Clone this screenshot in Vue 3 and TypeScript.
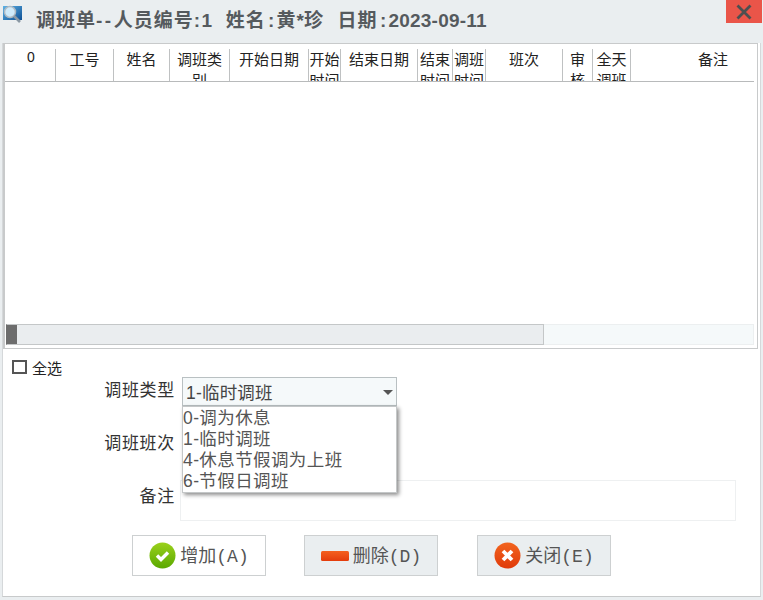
<script setup lang="ts">
interface Col { label: string; width: number }
const cols: Col[] = [
  { label: '0', width: 51 },
  { label: '工号', width: 58 },
  { label: '姓名', width: 56 },
  { label: '调班类别', width: 60 },
  { label: '开始日期', width: 79 },
  { label: '开始时间', width: 32 },
  { label: '结束日期', width: 77 },
  { label: '结束时间', width: 35 },
  { label: '调班时间', width: 33 },
  { label: '班次', width: 77 },
  { label: '审核', width: 30 },
  { label: '全天调班', width: 38 },
  { label: '备注', width: 164 },
]
const options = ['0-调为休息', '1-临时调班', '4-休息节假调为上班', '6-节假日调班']
</script>

<template>
  <div class="window">
    <header class="titlebar">
      <svg class="logo" width="22" height="20" viewBox="0 0 22 20">
        <defs>
          <linearGradient id="lg" x1="0" y1="0" x2="1" y2="1"><stop offset="0" stop-color="#5db2e6" /><stop offset="1" stop-color="#0d4f94" /></linearGradient>
        </defs>
        <rect x="1" y="1" width="19" height="14" fill="url(#lg)" />
        <circle cx="8" cy="7" r="5.5" fill="#cfeafa" stroke="#aeb9c2" stroke-width="1.5" />
        <path d="M12 11l6 6" stroke="#8a98a4" stroke-width="2.6" />
      </svg>
      <h1 class="title"><span class="cj">调班单</span><span class="dash">--</span><span class="cj">人员编号</span><span class="colon-a">:</span>1<span class="gap">&nbsp;&nbsp;</span><span class="cj">姓名</span><span class="colon-b">:</span><span class="cj">黄</span>*<span class="cj">珍</span><span class="gap">&nbsp;&nbsp;</span><span class="cj">日期</span><span class="colon-b">:</span><span class="date">2023-09-11</span></h1>
      <button class="close-x" type="button" aria-label="关闭">
        <svg width="16" height="16" viewBox="0 0 16 16"><path d="M1.5 1.5l13 13M14.5 1.5l-13 13" stroke="#4d4f50" stroke-width="2.8" /></svg>
      </button>
    </header>

    <main class="body">
      <section class="grid-panel">
        <div class="grid-head">
          <div v-for="c in cols" :key="c.label" class="cell" :style="{ width: c.width + 'px' }">
            <span :class="c.label === '0' ? 'zero' : ''">{{ c.label }}</span>
          </div>
        </div>
        <div class="grid-body"></div>
        <div class="hscroll">
          <div class="hscroll-track">
            <div class="hscroll-thumb"></div>
          </div>
        </div>
      </section>

      <label class="select-all"><span class="checkbox"></span>全选</label>

      <div class="form">
        <div class="row row-type">
          <span class="label">调班类型</span>
          <div class="combo">
            <div class="combo-box">
              <span>1-临时调班</span>
              <i class="caret"></i>
            </div>
            <ul class="menu">
              <li v-for="o in options" :key="o">{{ o }}</li>
            </ul>
          </div>
        </div>
        <div class="row row-shift">
          <span class="label">调班班次</span>
        </div>
        <div class="row row-note">
          <span class="label">备注</span>
          <div class="note"></div>
        </div>
      </div>

      <div class="actions">
        <button class="btn" type="button">
          <svg width="27" height="27" viewBox="0 0 27 27">
            <defs><linearGradient id="g" x1="0" y1="0" x2="0" y2="1"><stop offset="0" stop-color="#9ad11c" /><stop offset="1" stop-color="#5aa800" /></linearGradient></defs>
            <circle cx="13.5" cy="13.5" r="13" fill="url(#g)" />
            <path d="M8 13.5l4 4 7-7" fill="none" stroke="#fff" stroke-width="3.4" />
          </svg>
          <span class="btn-text">增加(A)</span>
        </button>
        <button class="btn alt" type="button">
          <svg width="28" height="10" viewBox="0 0 28 10">
            <defs><linearGradient id="r" x1="0" y1="0" x2="0" y2="1"><stop offset="0" stop-color="#f4601f" /><stop offset="1" stop-color="#e43c0c" /></linearGradient></defs>
            <rect x="0" y="0" width="28" height="10" rx="1.5" fill="url(#r)" />
          </svg>
          <span class="btn-text">删除(D)</span>
        </button>
        <button class="btn alt last" type="button">
          <svg width="27" height="27" viewBox="0 0 27 27">
            <defs><linearGradient id="o" x1="0" y1="0" x2="0" y2="1"><stop offset="0" stop-color="#f2641e" /><stop offset="1" stop-color="#e03a0a" /></linearGradient></defs>
            <circle cx="13.5" cy="13.5" r="13" fill="url(#o)" />
            <path d="M9 9l9 9M18 9l-9 9" stroke="#fff" stroke-width="3.8" />
          </svg>
          <span class="btn-text">关闭(E)</span>
        </button>
      </div>
    </main>
  </div>
</template>

<style>
html, body { margin: 0; padding: 0; background: #eaeef0; }
</style>

<style scoped>
.window {
  width: 763px;
  height: 600px;
  background: #eaeef0;
  overflow: hidden;
  display: flex;
  flex-direction: column;
  font-family: "Liberation Sans", "Noto Sans CJK SC", sans-serif;
}
.titlebar {
  height: 43px;
  flex: none;
  display: flex;
  position: relative;
  padding-left: 2px;
}
.logo { margin-top: 5px; }
.title {
  margin: 10px 0 0 12px;
  font: bold 19px/22px "Liberation Sans", "Noto Sans CJK SC", sans-serif;
  color: #555a5e;
  white-space: nowrap;
}
.cj { letter-spacing: 1px; }
.dash { letter-spacing: 2.5px; }
.colon-a { letter-spacing: 1.5px; }
.colon-b { margin: 0 2.3px; }
.gap { letter-spacing: 1.5px; }
.date { letter-spacing: 0.2px; }
.close-x {
  position: absolute;
  right: 1px;
  top: 0;
  width: 36px;
  height: 23px;
  padding: 0;
  border: 0;
  background: #ea5549;
  display: flex;
  align-items: center;
  justify-content: center;
}
.body {
  flex: 1;
  margin: 0 2px 3px 2px;
  background: #fff;
  border-left: 1px solid #d5d8da;
  border-right: 1px solid #d5d8da;
  border-bottom: 1px solid #c8cacb;
  display: flex;
  flex-direction: column;
  min-height: 0;
}
.grid-panel {
  margin: 0 2px 0 0;
  height: 306px;
  box-sizing: border-box;
  border: 1px solid #c8cacb;
  border-left: 2px solid #c8cacb;
  display: flex;
  flex-direction: column;
  flex: none;
}
.grid-head {
  display: flex;
  height: 37px;
  flex: none;
  border-bottom: 1px solid #b8babb;
  width: 749px;
}
.cell {
  flex: none;
  box-sizing: border-box;
  height: 32px;
  margin-top: 5px;
  overflow: hidden;
  border-right: 1px solid #bfc1c2;
  text-align: center;
  font-size: 15px;
  line-height: 21px;
  color: #222;
  word-break: break-all;
}
.cell:last-child { border-right: 0; }
.zero {
  position: relative;
  top: -3px;
  left: 1px;
  font-size: 14px;
}
.grid-body { flex: 1; }
.hscroll { height: 24px; flex: none; }
.hscroll-track {
  height: 21px;
  box-sizing: border-box;
  width: 748px;
  margin-left: 1px;
  background: #f5f9fa;
  border: 1px solid #eceff0;
}
.hscroll-thumb {
  width: 538px;
  height: 21px;
  box-sizing: border-box;
  margin: -1px 0 0 -1px;
  background: linear-gradient(90deg, #6d6d6d 10px, #eaedef 10px);
  border: 1px solid #c4c7c8;
  border-left-color: #6d6d6d;
}
.select-all {
  display: flex;
  align-items: center;
  margin: 9px 0 0 9px;
  height: 18px;
  font-size: 15px;
  color: #222;
}
.checkbox {
  width: 15px;
  height: 14px;
  box-sizing: border-box;
  border: 2px solid #555;
  margin-right: 5px;
}
.row { display: flex; align-items: flex-start; }
.label {
  width: 172px;
  text-align: right;
  font-size: 17px;
  letter-spacing: 0.7px;
  line-height: 22px;
  padding-top: 3px;
  color: #333;
  flex: none;
}
.row-type { margin-top: 1px; height: 53px; }
.row-shift { height: 50px; }
.combo { margin-left: 7px; position: relative; }
.combo-box {
  width: 215px;
  height: 29px;
  box-sizing: border-box;
  background: #f5f9fa;
  border: 1px solid #b9c0c2;
  display: flex;
  align-items: center;
  padding-left: 3px;
  font-size: 17.5px;
  letter-spacing: 0.2px;
  color: #444;
  position: relative;
}
.caret {
  position: absolute;
  right: 3px;
  top: 12px;
  border-left: 5px solid transparent;
  border-right: 5px solid transparent;
  border-top: 5px solid #555;
}
.menu {
  list-style: none;
  margin: 0;
  padding: 1px 0 0 0;
  position: absolute;
  left: 0;
  top: 29px;
  width: 215px;
  box-sizing: border-box;
  background: #fff;
  border: 1px solid #c4c7c8;
  box-shadow: 2px 2px 4px rgba(0, 0, 0, 0.45);
  z-index: 2;
  font-size: 17.5px;
  letter-spacing: 0.4px;
  line-height: 21px;
  color: #555;
}
.row-note { height: 41px; }
.row-note .label { padding-top: 6px; }
.note {
  margin-left: 5px;
  width: 556px;
  height: 41px;
  box-sizing: border-box;
  border: 1px solid #eef0f1;
}
.actions {
  display: flex;
  margin: 14px 0 0 129px;
  gap: 38px;
}
.btn {
  width: 134px;
  height: 41px;
  box-sizing: border-box;
  background: #fff;
  border: 1px solid #cdd0d1;
  display: flex;
  align-items: center;
  justify-content: center;
  gap: 4px;
  font: 18px "Liberation Mono", "Noto Sans CJK SC", monospace;
  color: #555;
  padding: 0;
}
.btn-text { margin-top: -4px; }
.alt { background: #eaeef0; }
.last { margin-left: 1px; }
</style>
